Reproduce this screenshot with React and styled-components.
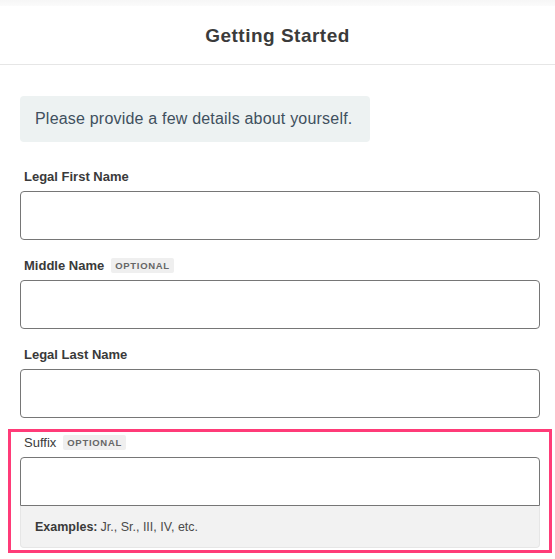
import React from "react";
import styled, { createGlobalStyle } from "styled-components";

const GlobalStyle = createGlobalStyle`
  body {
    margin: 0;
    background: #fff;
    font-family: "Liberation Sans", Arial, sans-serif;
    color: #3a3a3a;
  }
`;

const TopStrip = styled.div`
  height: 6px;
  background: linear-gradient(#f6f6f6, #fbfbfb);
`;

const Header = styled.header`
  height: 58px;
  display: flex;
  align-items: center;
  justify-content: center;
  border-bottom: 1px solid #e6e6e6;

  h1 {
    margin: 2px 0 0;
    font-size: 19px;
    font-weight: 700;
    letter-spacing: 0.5px;
    color: #3b3b3b;
  }
`;

const Content = styled.main`
  padding: 31px 15px 0 20px;
`;

const Notice = styled.div`
  display: flex;
  align-items: center;
  box-sizing: border-box;
  width: 350px;
  height: 46px;
  padding: 0 15px;
  border-radius: 4px;
  background: #edf2f2;
  color: #3f505e;
  font-size: 16px;
  letter-spacing: 0.2px;
  margin-bottom: 25px;
`;

const Field = styled.div`
  margin-top: ${(p) => (p.$highlighted ? "11px" : "16px")};
  &:first-of-type {
    margin-top: 0;
  }
  ${(p) =>
    p.$highlighted &&
    `
    margin-left: -12px;
    margin-right: -12px;
    padding: 1px 9px 2px;
    border: 3px solid #ff3b78;
  `}
`;

const Label = styled.label`
  display: flex;
  align-items: center;
  gap: 7px;
  height: 18px;
  margin: 0 0 6px 4px;
  font-size: 13px;
  font-weight: ${(p) => (p.$light ? 400 : 700)};
  color: #3a3a3a;
`;

const Badge = styled.span`
  padding: 2px 4px;
  border-radius: 2px;
  background: #efefef;
  color: #666;
  font-size: 9.5px;
  font-weight: 700;
  letter-spacing: 0.7px;
`;

const Input = styled.input`
  display: block;
  box-sizing: border-box;
  width: 100%;
  height: 49px;
  margin: 0;
  padding: 0 14px;
  border: 1px solid #767676;
  border-radius: ${(p) => (p.$attached ? "4px 4px 0 0" : "4px")};
  font-size: 15px;
  font-family: inherit;
  outline: none;
`;

const Hint = styled.div`
  display: flex;
  align-items: center;
  height: 42px;
  box-sizing: border-box;
  padding: 0 14px;
  background: #f2f2f2;
  border: 1px solid #e6e6e6;
  border-top: none;
  border-radius: 0 0 4px 4px;
  font-size: 12.5px;
  color: #4a4a4a;

  strong {
    margin-right: 3px;
    color: #3a3a3a;
  }
`;

const fields = [
  { label: "Legal First Name" },
  { label: "Middle Name", optional: true },
  { label: "Legal Last Name" },
];

export default function App() {
  return (
    <>
      <GlobalStyle />
      <TopStrip />
      <Header>
        <h1>Getting Started</h1>
      </Header>
      <Content>
        <Notice>Please provide a few details about yourself.</Notice>
        {fields.map((f) => (
          <Field key={f.label}>
            <Label>
              {f.label}
              {f.optional && <Badge>OPTIONAL</Badge>}
            </Label>
            <Input />
          </Field>
        ))}
        <Field $highlighted>
          <Label $light>
            Suffix
            <Badge>OPTIONAL</Badge>
          </Label>
          <Input $attached />
          <Hint>
            <strong>Examples:</strong> Jr., Sr., III, IV, etc.
          </Hint>
        </Field>
      </Content>
    </>
  );
}
